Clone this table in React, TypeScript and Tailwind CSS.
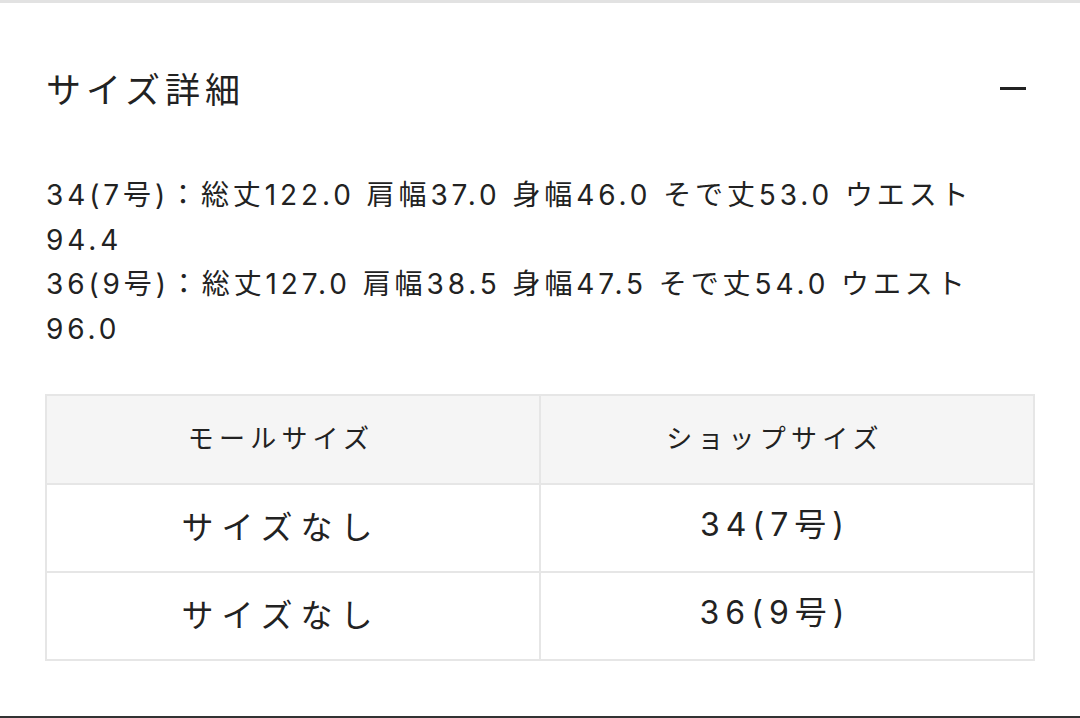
import React from "react";

const font = { fontFamily: '"Noto Sans CJK JP", "Noto Sans", sans-serif' };
const mixed = { fontFamily: 'Inter, "Noto Sans CJK JP", sans-serif' };

export default function App() {
  const rows = [
    ["サイズなし", "34(7号)"],
    ["サイズなし", "36(9号)"],
  ];
  const th = "border-2 border-[#e6e6e6] font-normal text-[26px] tracking-[5.2px] text-center pr-[24px] pb-[6px]";
  const td1 = "border-2 border-[#e6e6e6] text-[32px] tracking-[8px] text-center pr-[24px] pb-[6px]";
  const td2 = "border-2 border-[#e6e6e6] text-[32px] tracking-[6px] text-center pr-[24px] pb-[6px]";
  return (
    <div
      className="w-[1080px] h-[718px] bg-white border-t-[3px] border-t-[#e2e2e2] border-b-[2px] border-b-[#333333] text-[#222222] flex flex-col overflow-hidden"
      style={font}
    >
      <div className="flex items-center justify-between pl-[46px] pr-[54px] pt-[63px]">
        <div className="text-[35px] leading-[44px] tracking-[5px]">サイズ詳細</div>
        <div className="w-[26px] h-[3px] bg-[#222222]" />
      </div>
      <div className="mt-[63px] px-[46px] text-[28px] leading-[44.5px] tracking-[3.9px]" style={mixed}>
        <div>34(7号)：総丈122.0 肩幅37.0 身幅46.0 そで丈53.0 ウエスト</div>
        <div>94.4</div>
        <div>36(9号)：総丈127.0 肩幅38.5 身幅47.5 そで丈54.0 ウエスト</div>
        <div>96.0</div>
      </div>
      <div className="mt-[43px] ml-[45px] w-[990px]">
        <table className="w-full border-collapse border-2 border-[#e6e6e6] table-fixed">
          <thead>
            <tr className="bg-[#f5f5f5] h-[89px]">
              <th className={th}>モールサイズ</th>
              <th className={th}>ショップサイズ</th>
            </tr>
          </thead>
          <tbody>
            {rows.map((r, i) => (
              <tr key={i} className="h-[88px]">
                <td className={td1}>{r[0]}</td>
                <td className={td2} style={mixed}>{r[1]}</td>
              </tr>
            ))}
          </tbody>
        </table>
      </div>
    </div>
  );
}
